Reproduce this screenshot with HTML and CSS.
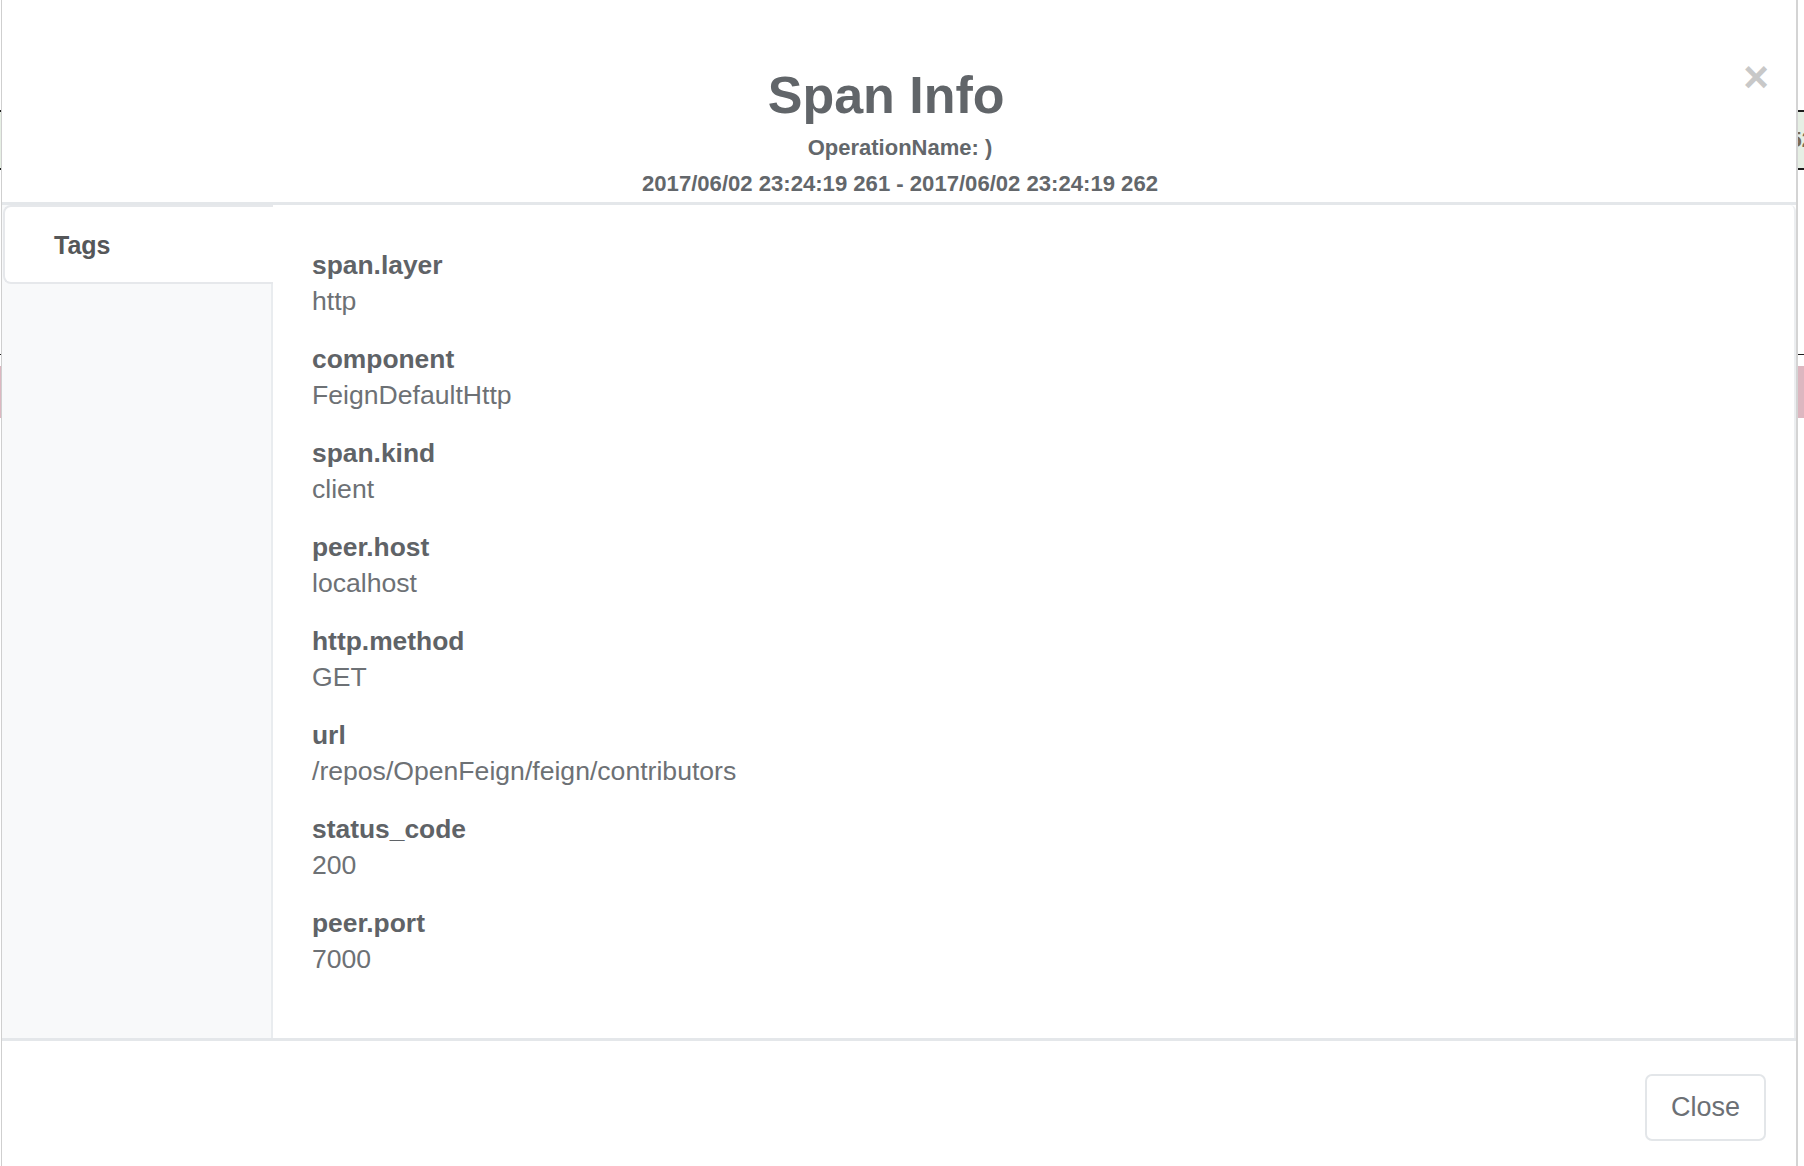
FILE: index.html
```html
<!DOCTYPE html>
<html lang="en">
<head>
<meta charset="utf-8">
<title>Span Info</title>
<link rel="stylesheet" href="styles.css">
</head>
<body>
<div class="page">
  <div class="pg-space pg-top"></div>
  <div class="pg-line"></div>
  <div class="pg-band green"><span class="pg-text">52</span></div>
  <div class="pg-line"></div>
  <div class="pg-space pg-mid"></div>
  <div class="pg-line thin"></div>
  <div class="pg-space pg-small"></div>
  <div class="pg-band pink"></div>
</div>

<div class="modal">
  <header class="modal-header">
    <div class="title-row">
      <h1 class="title">Span Info</h1>
      <button class="close" type="button" aria-label="Close">&times;</button>
    </div>
    <p class="op">OperationName: )</p>
    <p class="time">2017/06/02 23:24:19 261 - 2017/06/02 23:24:19 262</p>
  </header>

  <div class="modal-body">
    <nav class="side">
      <div class="tab">Tags</div>
      <div class="side-fill"></div>
    </nav>
    <div class="content">
      <dl class="tags">
        <div class="pair"><dt>span.layer</dt><dd>http</dd></div>
        <div class="pair"><dt>component</dt><dd>FeignDefaultHttp</dd></div>
        <div class="pair"><dt>span.kind</dt><dd>client</dd></div>
        <div class="pair"><dt>peer.host</dt><dd>localhost</dd></div>
        <div class="pair"><dt>http.method</dt><dd>GET</dd></div>
        <div class="pair"><dt>url</dt><dd>/repos/OpenFeign/feign/contributors</dd></div>
        <div class="pair"><dt>status_code</dt><dd>200</dd></div>
        <div class="pair"><dt>peer.port</dt><dd>7000</dd></div>
      </dl>
    </div>
  </div>

  <footer class="modal-footer">
    <button class="btn" type="button">Close</button>
  </footer>
</div>
</body>
</html>
```

FILE: styles.css
```css
html, body {
  margin: 0;
  padding: 0;
  height: 100%;
}

body {
  background: #ffffff;
  overflow: hidden;
  font-family: "Liberation Sans", Arial, Helvetica, sans-serif;
  position: relative;
}

/* page behind the modal */
.page {
  display: flex;
  flex-direction: column;
}
.pg-top { height: 110px; }
.pg-mid { height: 184px; }
.pg-small { height: 11px; }
.pg-line {
  height: 2px;
  background: #1e1e1e;
}
.pg-line.thin { height: 1px; }
.pg-band {
  display: flex;
  justify-content: flex-end;
  align-items: center;
}
.pg-band.green {
  height: 56px;
  background: #e6efe4;
}
.pg-band.pink {
  height: 52px;
  background: #dcb7c0;
}
.pg-text {
  font-size: 22px;
  font-weight: 700;
  color: #7a6a55;
  margin-right: -10px;
}

/* modal */
.modal {
  position: absolute;
  top: 0;
  left: 1px;
  width: 1797px;
  height: 1166px;
  box-sizing: border-box;
  background: #ffffff;
  border-left: 1px solid #cfcfcf;
  border-right: 2px solid #d4d4d4;
  display: flex;
  flex-direction: column;
}

.modal-header {
  padding: 64px 28px 0 30px;
  border-bottom: 3px solid #e4e7ea;
  color: #63676b;
}

.title-row {
  display: flex;
  align-items: flex-start;
}

.title {
  flex: 1;
  margin: 0;
  text-align: center;
  font-size: 52px;
  line-height: 62px;
  font-weight: 700;
  color: #616569;
}

.close {
  align-self: flex-start;
  margin-top: -9px;
  margin-right: -4px;
  padding: 0 3px;
  border: 0;
  background: transparent;
  font-family: "Liberation Sans", Arial, sans-serif;
  font-size: 44px;
  line-height: 44px;
  font-weight: 700;
  color: #c8c8c8;
}

.op,
.time {
  margin: 0;
  text-align: center;
  font-weight: 700;
  color: #63676b;
}
.op {
  margin-top: 3px;
  font-size: 22px;
  line-height: 37px;
}
.time {
  font-size: 22.1px;
  line-height: 36px;
}

.modal-body {
  display: flex;
  border-bottom: 3px solid #e4e7ea;
}

.side {
  width: 271px;
  display: flex;
  flex-direction: column;
  background: #f8f9fa;
}

.tab {
  height: 75px;
  margin-left: 1px;
  padding-left: 49px;
  padding-top: 2px;
  box-sizing: border-box;
  height: 79px;
  display: flex;
  align-items: center;
  background: #ffffff;
  border: 2px solid #e6e8eb;
  border-right: 0;
  border-radius: 8px 0 0 8px;
  font-size: 25px;
  font-weight: 700;
  color: #555759;
}

.side-fill {
  flex: 1;
  border-right: 2px solid #e9ecef;
}

.content {
  flex: 1;
  padding: 42px 0 61px 39px;
  border-right: 2px solid #eceef0;
  border-radius: 0 6px 0 0;
}

.tags {
  margin: 0;
  display: flex;
  flex-direction: column;
  gap: 22px;
}

.pair dt {
  font-size: 26.4px;
  line-height: 36px;
  font-weight: 700;
  color: #5f6367;
}

.pair dd {
  margin: 0;
  font-size: 26.6px;
  line-height: 36px;
  color: #6d7175;
}

.modal-footer {
  display: flex;
  justify-content: flex-end;
  padding: 33px 30px 40px;
}

.btn {
  font-family: "Liberation Sans", Arial, sans-serif;
  font-size: 27px;
  line-height: 37px;
  padding: 13px 24px;
  border: 2px solid #e3e6e9;
  border-radius: 7px;
  background: #ffffff;
  color: #6c7075;
}
```
